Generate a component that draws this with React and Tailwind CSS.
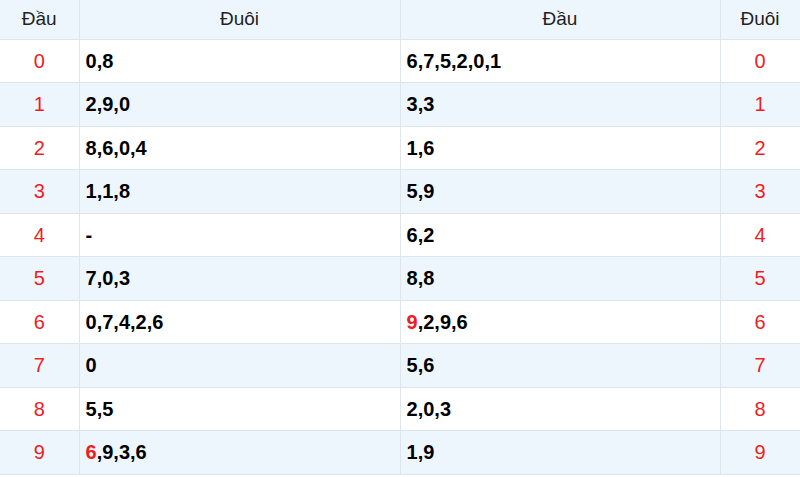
// hl = index of the number shown in red (or -1)
const rows = [
  { d: '0', left: ['0', '8'], right: ['6', '7', '5', '2', '0', '1'] },
  { d: '1', left: ['2', '9', '0'], right: ['3', '3'] },
  { d: '2', left: ['8', '6', '0', '4'], right: ['1', '6'] },
  { d: '3', left: ['1', '1', '8'], right: ['5', '9'] },
  { d: '4', left: ['-'], right: ['6', '2'] },
  { d: '5', left: ['7', '0', '3'], right: ['8', '8'] },
  { d: '6', left: ['0', '7', '4', '2', '6'], right: ['9', '2', '9', '6'], hlRight: 0 },
  { d: '7', left: ['0'], right: ['5', '6'] },
  { d: '8', left: ['5', '5'], right: ['2', '0', '3'] },
  { d: '9', left: ['6', '9', '3', '6'], right: ['1', '9'], hlLeft: 0 },
];

function Nums({ list, hl }) {
  return (
    <>
      {list.map((n, i) => (
        <span key={i}>
          {i > 0 && ','}
          <span className={i === hl ? 'text-[#f01c24]' : ''}>{n}</span>
        </span>
      ))}
    </>
  );
}

export default function App() {
  return (
    <div className="w-[800px] h-[477px] bg-white font-['Liberation_Sans',Arial,sans-serif]">
      <table className="w-[800px] border-collapse table-fixed">
        <colgroup>
          <col className="w-[79px]" />
          <col className="w-[321px]" />
          <col className="w-[320px]" />
          <col className="w-[80px]" />
        </colgroup>
        <thead>
          <tr className="h-[39px] bg-[#eef6fd] text-[19px] text-[#222]">
            <th className="font-normal border border-t-0 border-l-0 border-[#dfe5ec]">Đầu</th>
            <th className="font-normal border border-t-0 border-[#dfe5ec]">Đuôi</th>
            <th className="font-normal border border-t-0 border-[#dfe5ec]">Đầu</th>
            <th className="font-normal border border-t-0 border-[#dfe5ec]">Đuôi</th>
          </tr>
        </thead>
        <tbody>
          {rows.map((r, i) => (
            <tr key={r.d} className={`h-[43.5px] ${i % 2 === 1 ? 'bg-[#eef6fd]' : 'bg-white'}`}>
              <td className="text-center text-[20px] text-[#f01c24] border border-l-0 border-[#dfe5ec]">{r.d}</td>
              <td className="px-[6px] text-[20px] font-bold text-black border border-[#dfe5ec]">
                <Nums list={r.left} hl={r.hlLeft ?? -1} />
              </td>
              <td className="px-[6px] text-[20px] font-bold text-black border border-[#dfe5ec]">
                <Nums list={r.right} hl={r.hlRight ?? -1} />
              </td>
              <td className="text-center text-[20px] text-[#f01c24] border border-[#dfe5ec]">{r.d}</td>
            </tr>
          ))}
        </tbody>
      </table>
    </div>
  );
}
